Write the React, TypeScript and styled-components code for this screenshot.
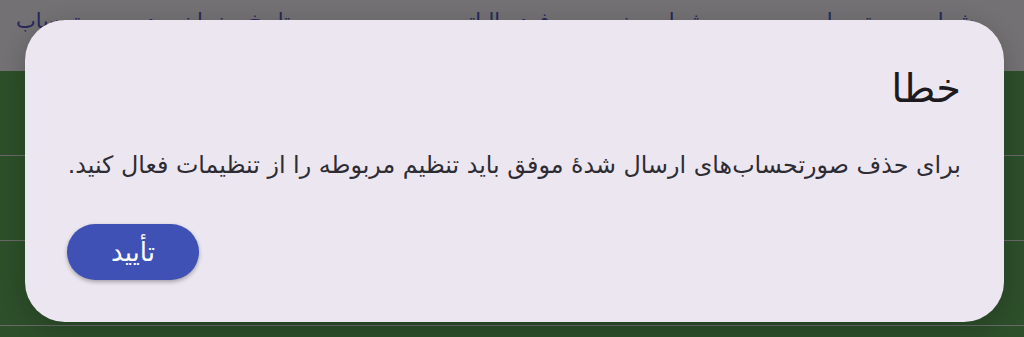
import * as React from 'react';
import styled, { createGlobalStyle } from 'styled-components';

const GlobalStyle = createGlobalStyle`
  html, body {
    margin: 0;
    padding: 0;
    width: 1024px;
    height: 337px;
    overflow: hidden;
    background: #5a9e54;
    font-family: 'DejaVu Sans', 'Noto Sans', sans-serif;
  }
`;

const Page = styled.div`
  position: relative;
  width: 1024px;
  height: 337px;
  direction: rtl;
  background: #5a9e54;
  overflow: hidden;
`;

const HeaderRow = styled.div`
  display: flex;
  align-items: flex-start;
  height: 71px;
  padding-top: 9px;
  box-sizing: border-box;
  background: #e6e2e6;
  color: #4a50b8;
  font-size: 21px;
  white-space: nowrap;
`;

const HeaderCell = styled.div<{ width: number; inset: number }>`
  width: ${({ width }) => width}px;
  padding-right: ${({ inset }) => inset}px;
  flex-shrink: 0;
  box-sizing: border-box;
`;

const Row = styled.div`
  height: 85px;
  box-sizing: border-box;
  border-bottom: 1px solid #d2d2d2;
  &:first-of-type {
    height: 84px;
  }
`;

const Overlay = styled.div`
  position: absolute;
  inset: 0;
  background: rgba(0, 0, 0, 0.5);
  display: flex;
  padding: 20px 20px 15px 25px;
  box-sizing: border-box;
`;

const Dialog = styled.div`
  flex: 1;
  min-width: 0;
  background: #ece6f0;
  border-radius: 40px;
  padding: 48px 43px 0 42px;
  box-sizing: border-box;
  display: flex;
  flex-direction: column;
  box-shadow: 0 6px 24px rgba(0, 0, 0, 0.2);
`;

const Title = styled.h2`
  margin: 0;
  font-weight: 400;
  font-size: 40px;
  line-height: 40px;
  color: #1d1b20;
`;

const Message = styled.p`
  margin: 41px 0 0;
  font-size: 23.8px;
  line-height: 32px;
  color: #2e2c33;
  white-space: nowrap;
`;

const Actions = styled.div`
  display: flex;
  justify-content: flex-end;
  margin-top: 43px;
`;

const ConfirmButton = styled.button`
  width: 132px;
  height: 56px;
  border: none;
  border-radius: 28px;
  background: #3f51b5;
  color: #ffffff;
  font-family: 'DejaVu Sans', sans-serif;
  font-size: 26px;
  padding: 0;
  box-shadow: 0 2px 4px rgba(0, 0, 0, 0.3);
  cursor: pointer;
`;

export default function App() {
  return (
    <>
      <GlobalStyle />
      <Page>
        <HeaderRow>
          <HeaderCell width={220} inset={50}>شماره صورتحساب</HeaderCell>
          <HeaderCell width={400} inset={99}>شماره منحصر به فرد مالیاتی</HeaderCell>
          <HeaderCell width={404} inset={114}>تاریخ و زمان صدور صورتحساب</HeaderCell>
        </HeaderRow>
        <Row />
        <Row />
        <Row />
        <Overlay>
          <Dialog role="dialog">
            <Title>خطا</Title>
            <Message>
              برای حذف صورتحساب‌های ارسال شدهٔ موفق باید تنظیم مربوطه را از تنظیمات فعال کنید.
            </Message>
            <Actions>
              <ConfirmButton>تأیید</ConfirmButton>
            </Actions>
          </Dialog>
        </Overlay>
      </Page>
    </>
  );
}
